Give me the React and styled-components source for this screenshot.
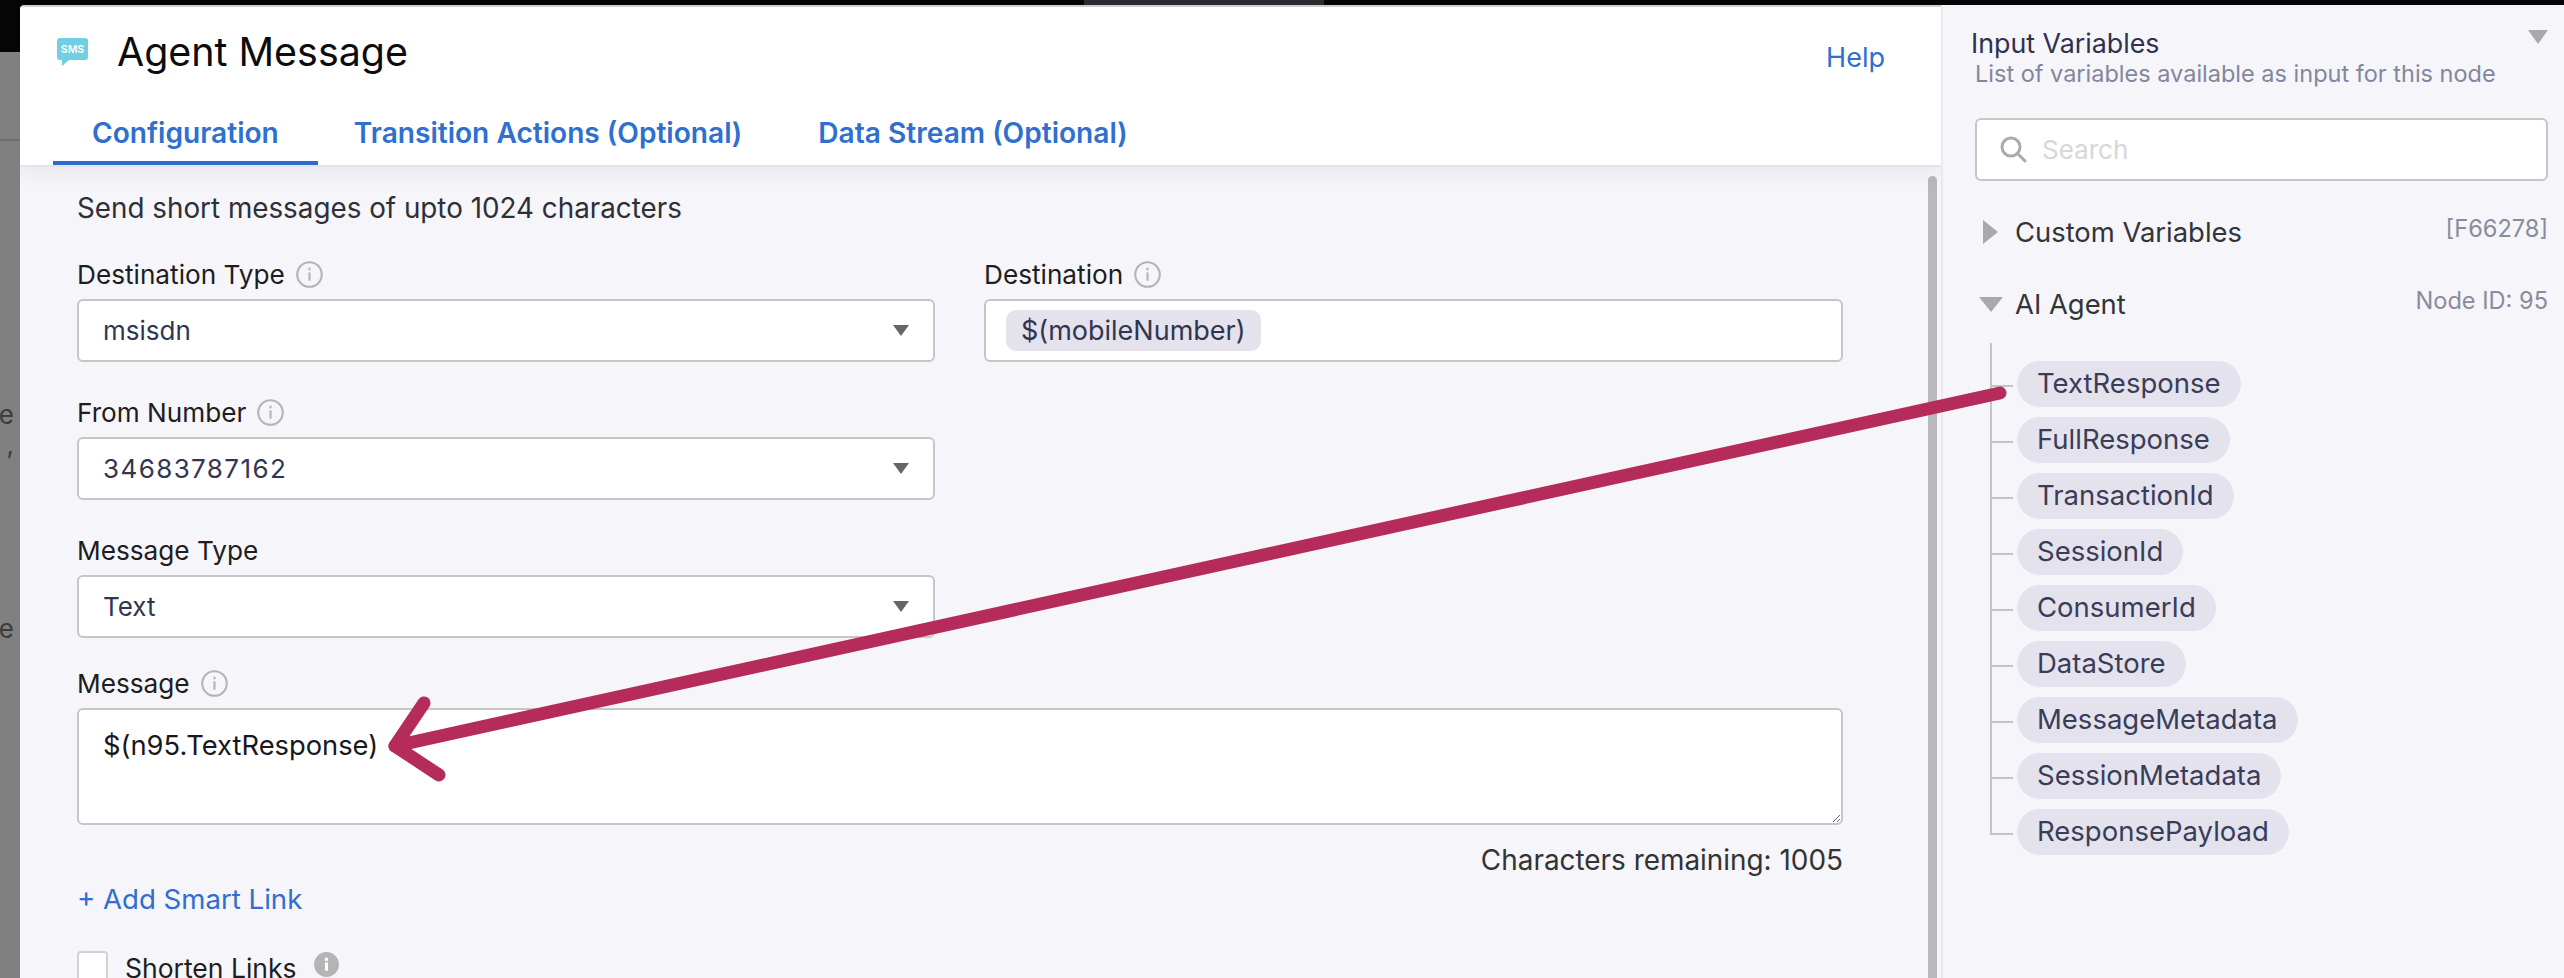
import React from 'react';
import styled, { createGlobalStyle } from 'styled-components';

const Global = createGlobalStyle`
  html, body { margin: 0; padding: 0; background: #000; overflow: hidden; }
  * { box-sizing: border-box; }
  body { font-family: Inter, "Noto Sans", sans-serif; }
`;

const Page = styled.div`
  position: relative;
  width: 2564px;
  height: 978px;
  overflow: hidden;
  display: flex;
  flex-direction: column;
`;

const TopBar = styled.div`
  height: 5px;
  flex: none;
  background: #050505;
  display: flex;
  & i { display: block; margin-left: 1084px; width: 240px; background: #2b2b31; }
`;

const Main = styled.div`
  flex: 1;
  display: flex;
  min-height: 0;
`;

const Backdrop = styled.div`
  width: 20px;
  flex: none;
  background: linear-gradient(#6d6d6d, #6d6d6d) 0 87px / 100% 2px no-repeat, #808080;
  border-top: 47px solid #050505;
  overflow: hidden;
  display: flex;
  flex-direction: column;
  align-items: flex-end;
  color: #3c3c3c;
  font-size: 26px;
  padding-top: 348px;
  & span { line-height: 30px; margin-right: 6px; }
  & span:last-child { margin-top: 154px; }
`;

const Modal = styled.div`
  width: 1921px;
  flex: none;
  display: flex;
  flex-direction: column;
  border-top: 2px solid #cfcfcf;
  border-radius: 4px 0 0 0;
  overflow: hidden;
  background: #f5f5fa;
`;

const Header = styled.header`
  height: 160px;
  flex: none;
  background: #fff;
  border-bottom: 2px solid #e4e4e6;
  box-shadow: 0 6px 22px rgba(40, 40, 60, 0.07);
  display: flex;
  flex-direction: column;
  position: relative;
  z-index: 1;
`;

const TitleRow = styled.div`
  height: 98px;
  display: flex;
  align-items: center;
  padding: 0 56px 8px 37px;
`;

const Title = styled.h1`
  margin: 0 0 0 29px;
  font-size: 39.4px;
  font-weight: 400;
  color: #0c0c0e;
  flex: 1;
`;

const Help = styled.a`
  font-size: 27px;
  color: #2e6fd0;
  margin-top: 10px;
`;

const Tabs = styled.nav`
  display: flex;
  padding-left: 33px;
  gap: 36px;
  height: 58px;
`;

const Tab = styled.a`
  font-size: 28.1px;
  font-weight: 600;
  color: #2e6fd0;
  padding: 0 ${props => props.$pad}px;
  line-height: 56px;
  height: 60px;
  border-bottom: 4px solid ${props => props.$active ? '#2d6cc9' : 'transparent'};
`;

const Body = styled.div`
  flex: 1;
  min-height: 0;
  display: flex;
  position: relative;
`;

const Form = styled.div`
  width: 1908px;
  padding: 21px 0 0 57px;
`;

const Scrollbar = styled.div`
  width: 9px;
  margin-top: 9px;
  background: #b9b9b9;
  border-radius: 5px 5px 0 0;
`;

const Lead = styled.p`
  margin: 0 0 29px;
  font-size: 27.8px;
  line-height: 40px;
  color: #2f2f36;
`;

const Row = styled.div`
  display: grid;
  grid-template-columns: 858px 859px;
  column-gap: 49px;
`;

const Field = styled.div`
  width: ${props => props.$width || '858px'};
  margin-bottom: ${props => props.$after ?? 33}px;
`;

const Label = styled.label`
  display: flex;
  align-items: center;
  gap: 11px;
  height: 34px;
  margin-bottom: 8px;
  font-size: 26.2px;
  color: #1d1d22;
`;

const Box = styled.div`
  height: 63px;
  background: #fff;
  border: 2px solid #c6c6c8;
  border-radius: 6px;
  display: flex;
  align-items: center;
  padding: 0 ${props => props.$pad ?? 24}px;
  font-size: 26px;
  color: #33354f;
  position: relative;
`;

const SelectText = styled.span`
  flex: 1;
  letter-spacing: ${props => props.$spacing || 0}px;
`;

const Caret = styled.span`
  width: 0;
  height: 0;
  border-left: 8px solid transparent;
  border-right: 8px solid transparent;
  border-top: 11px solid #666;
`;

const Chip = styled.span`
  background: #e3e2ed;
  color: #33354f;
  border-radius: 10px;
  height: 41px;
  line-height: 41px;
  padding: 0 15px;
  font-size: 27px;
`;

const MessageBox = styled.textarea`
  display: block;
  width: 1766px;
  height: 117px;
  background: #fff;
  border: 2px solid #c6c6c8;
  border-radius: 6px;
  padding: 18px 24px;
  font: 27.3px/36px Inter, sans-serif;
  color: #17171c;
  outline: none;
`;

const Remaining = styled.div`
  width: 1766px;
  text-align: right;
  font-size: 27.9px;
  line-height: 34px;
  color: #333;
  margin-top: 18px;
`;

const AddLink = styled.a`
  display: block;
  margin-top: 2px;
  font-size: 27.6px;
  line-height: 40px;
  color: #2e6fd0;
`;

const CheckRow = styled.div`
  display: flex;
  align-items: flex-start;
  margin-top: 32px;
  font-size: 26.5px;
  line-height: 34px;
  color: #1d1d22;
`;

const Check = styled.span`
  width: 31px;
  height: 31px;
  background: #fff;
  border: 2px solid #d2d2d6;
  border-radius: 4px;
  margin-right: 17px;
`;

const ShortenHint = styled.span`
  margin-left: 16px;
  height: 27px;
`;

const Side = styled.aside`
  flex: 1;
  border-left: 2px solid #e9e9ee;
  background: #f5f5fa;
  padding: 21px 16px 0 32px;
  position: relative;
`;

const SideTitle = styled.div`
  display: flex;
  justify-content: space-between;
  align-items: center;
  font-size: 26.8px;
  line-height: 34px;
  color: #2f3150;
  margin-left: -4px;
`;

const SideCaret = styled.span`
  width: 0;
  height: 0;
  border-left: 10px solid transparent;
  border-right: 10px solid transparent;
  border-top: 14px solid #a9a9ad;
  margin-top: -12px;
`;

const SideSub = styled.div`
  font-size: 23.5px;
  line-height: 30px;
  color: #83869c;
  margin-top: -1px;
`;

const Search = styled.div`
  width: 573px;
  height: 63px;
  margin-top: 29px;
  background: #fff;
  border: 2px solid #c6c6c8;
  border-radius: 6px;
  display: flex;
  align-items: center;
  gap: 15px;
  padding-left: 23px;
  font-size: 26px;
  color: #d6d6db;
`;

const Section = styled.div`
  width: 573px;
  display: flex;
  align-items: center;
  height: ${props => props.$h}px;
  margin-top: ${props => props.$top}px;
  font-size: 27.4px;
  color: #333338;
`;

const Twist = styled.span`
  width: 40px;
  flex: none;
  display: flex;
  padding-left: ${props => props.$open ? 4 : 8}px;
  & i {
    display: block;
    width: 0;
    height: 0;
    ${props => props.$open
      ? 'border-left: 12px solid transparent; border-right: 12px solid transparent; border-top: 15px solid #a9a9ad;'
      : 'border-top: 12px solid transparent; border-bottom: 12px solid transparent; border-left: 15px solid #a9a9ad;'}
  }
`;

const SectionName = styled.span`
  flex: 1;
`;

const SectionMeta = styled.span`
  font-size: 23.6px;
  color: #8a8c9c;
  margin-top: -8px;
`;

const Tree = styled.ul`
  list-style: none;
  margin: 19px 0 0 15px;
  padding: 18px 0 0 27px;
  position: relative;
  display: flex;
  flex-direction: column;
  gap: 10px;
  align-items: flex-start;
  &::before {
    content: '';
    position: absolute;
    left: 0;
    top: 0;
    bottom: 22px;
    width: 2px;
    background: #c4c4c8;
  }
`;

const Leaf = styled.li`
  position: relative;
  height: 46px;
  line-height: 44px;
  padding: 0 20px;
  border-radius: 23px;
  background: #e3e2ed;
  color: #3a3c58;
  font-size: 27.5px;
  &::before {
    content: '';
    position: absolute;
    left: -27px;
    top: 24px;
    width: 23px;
    height: 2px;
    background: #c4c4c8;
  }
`;

const Annotation = styled.svg`
  position: absolute;
  left: 0;
  top: 0;
  pointer-events: none;
  z-index: 5;
`;

const InfoIcon = ({ filled }) => (
  <svg width="27" height="27" viewBox="0 0 26 26">
    {filled ? (
      <>
        <circle cx="13" cy="13" r="12" fill="#b4b4b4" />
        <rect x="11.5" y="11" width="3" height="8" fill="#fff" />
        <rect x="11.5" y="6.5" width="3" height="3" fill="#fff" />
      </>
    ) : (
      <>
        <circle cx="13" cy="13" r="11.8" fill="none" stroke="#b4b4b4" strokeWidth="2" />
        <rect x="12" y="11" width="2" height="8" fill="#b4b4b4" />
        <rect x="12" y="6.5" width="2" height="2.5" fill="#b4b4b4" />
      </>
    )}
  </svg>
);

const SmsIcon = () => (
  <svg width="31" height="28" viewBox="0 0 31 28">
    <path d="M3 0h25a3 3 0 0 1 3 3v16a3 3 0 0 1-3 3H12l-7 6v-6H3a3 3 0 0 1-3-3V3a3 3 0 0 1 3-3z" fill="#70cfe2" />
    <text x="15.5" y="15" textAnchor="middle" fontFamily="Inter, sans-serif" fontSize="10.5" fontWeight="600" fill="#fff">SMS</text>
  </svg>
);

const SearchIcon = () => (
  <svg width="27" height="27" viewBox="0 0 27 27" fill="none" stroke="#aeaaa6" strokeWidth="3">
    <circle cx="11" cy="11" r="9" />
    <path d="M17.5 17.5L25 25" strokeLinecap="round" />
  </svg>
);

const variables = [
  'TextResponse', 'FullResponse', 'TransactionId', 'SessionId', 'ConsumerId',
  'DataStore', 'MessageMetadata', 'SessionMetadata', 'ResponsePayload',
];

const App = () => (
  <Page>
    <Global />
    <TopBar><i /></TopBar>
    <Main>
      <Backdrop><span>e</span><span>,</span><span>e</span></Backdrop>
      <Modal>
        <Header>
          <TitleRow>
            <SmsIcon />
            <Title>Agent Message</Title>
            <Help>Help</Help>
          </TitleRow>
          <Tabs>
            <Tab $active $pad={39}>Configuration</Tab>
            <Tab $pad={0}>Transition Actions (Optional)</Tab>
            <Tab $pad={40}>Data Stream (Optional)</Tab>
          </Tabs>
        </Header>
        <Body>
          <Form>
            <Lead>Send short messages of upto 1024 characters</Lead>
            <Row>
              <Field>
                <Label>Destination Type <InfoIcon /></Label>
                <Box><SelectText>msisdn</SelectText><Caret /></Box>
              </Field>
              <Field $width="859px">
                <Label>Destination <InfoIcon /></Label>
                <Box $pad={20}><Chip>$(mobileNumber)</Chip></Box>
              </Field>
            </Row>
            <Field>
              <Label>From Number <InfoIcon /></Label>
              <Box><SelectText $spacing={1.4}>34683787162</SelectText><Caret /></Box>
            </Field>
            <Field $after={28}>
              <Label>Message Type</Label>
              <Box><SelectText>Text</SelectText><Caret /></Box>
            </Field>
            <Label>Message <InfoIcon /></Label>
            <MessageBox readOnly value="$(n95.TextResponse)" />
            <Remaining>Characters remaining: 1005</Remaining>
            <AddLink>+ Add Smart Link</AddLink>
            <CheckRow>
              <Check />
              Shorten Links
              <ShortenHint><InfoIcon filled /></ShortenHint>
            </CheckRow>
          </Form>
          <Scrollbar />
        </Body>
      </Modal>
      <Side>
        <SideTitle>Input Variables<SideCaret /></SideTitle>
        <SideSub>List of variables available as input for this node</SideSub>
        <Search><SearchIcon />Search</Search>
        <Section $h={40} $top={31}>
          <Twist><i /></Twist>
          <SectionName>Custom Variables</SectionName>
          <SectionMeta>[F66278]</SectionMeta>
        </Section>
        <Section $h={40} $top={32}>
          <Twist $open><i /></Twist>
          <SectionName>AI Agent</SectionName>
          <SectionMeta>Node ID: 95</SectionMeta>
        </Section>
        <Tree>
          {variables.map(name => <Leaf key={name}>{name}</Leaf>)}
        </Tree>
      </Side>
    </Main>
    <Annotation width="2564" height="978" viewBox="0 0 2564 978" fill="none" stroke="#b52c5b" strokeWidth="13" strokeLinecap="round" strokeLinejoin="round">
      <path d="M2000 393L395 746" />
      <path d="M424 703L395 746L439 775" />
    </Annotation>
  </Page>
);

export default App;
